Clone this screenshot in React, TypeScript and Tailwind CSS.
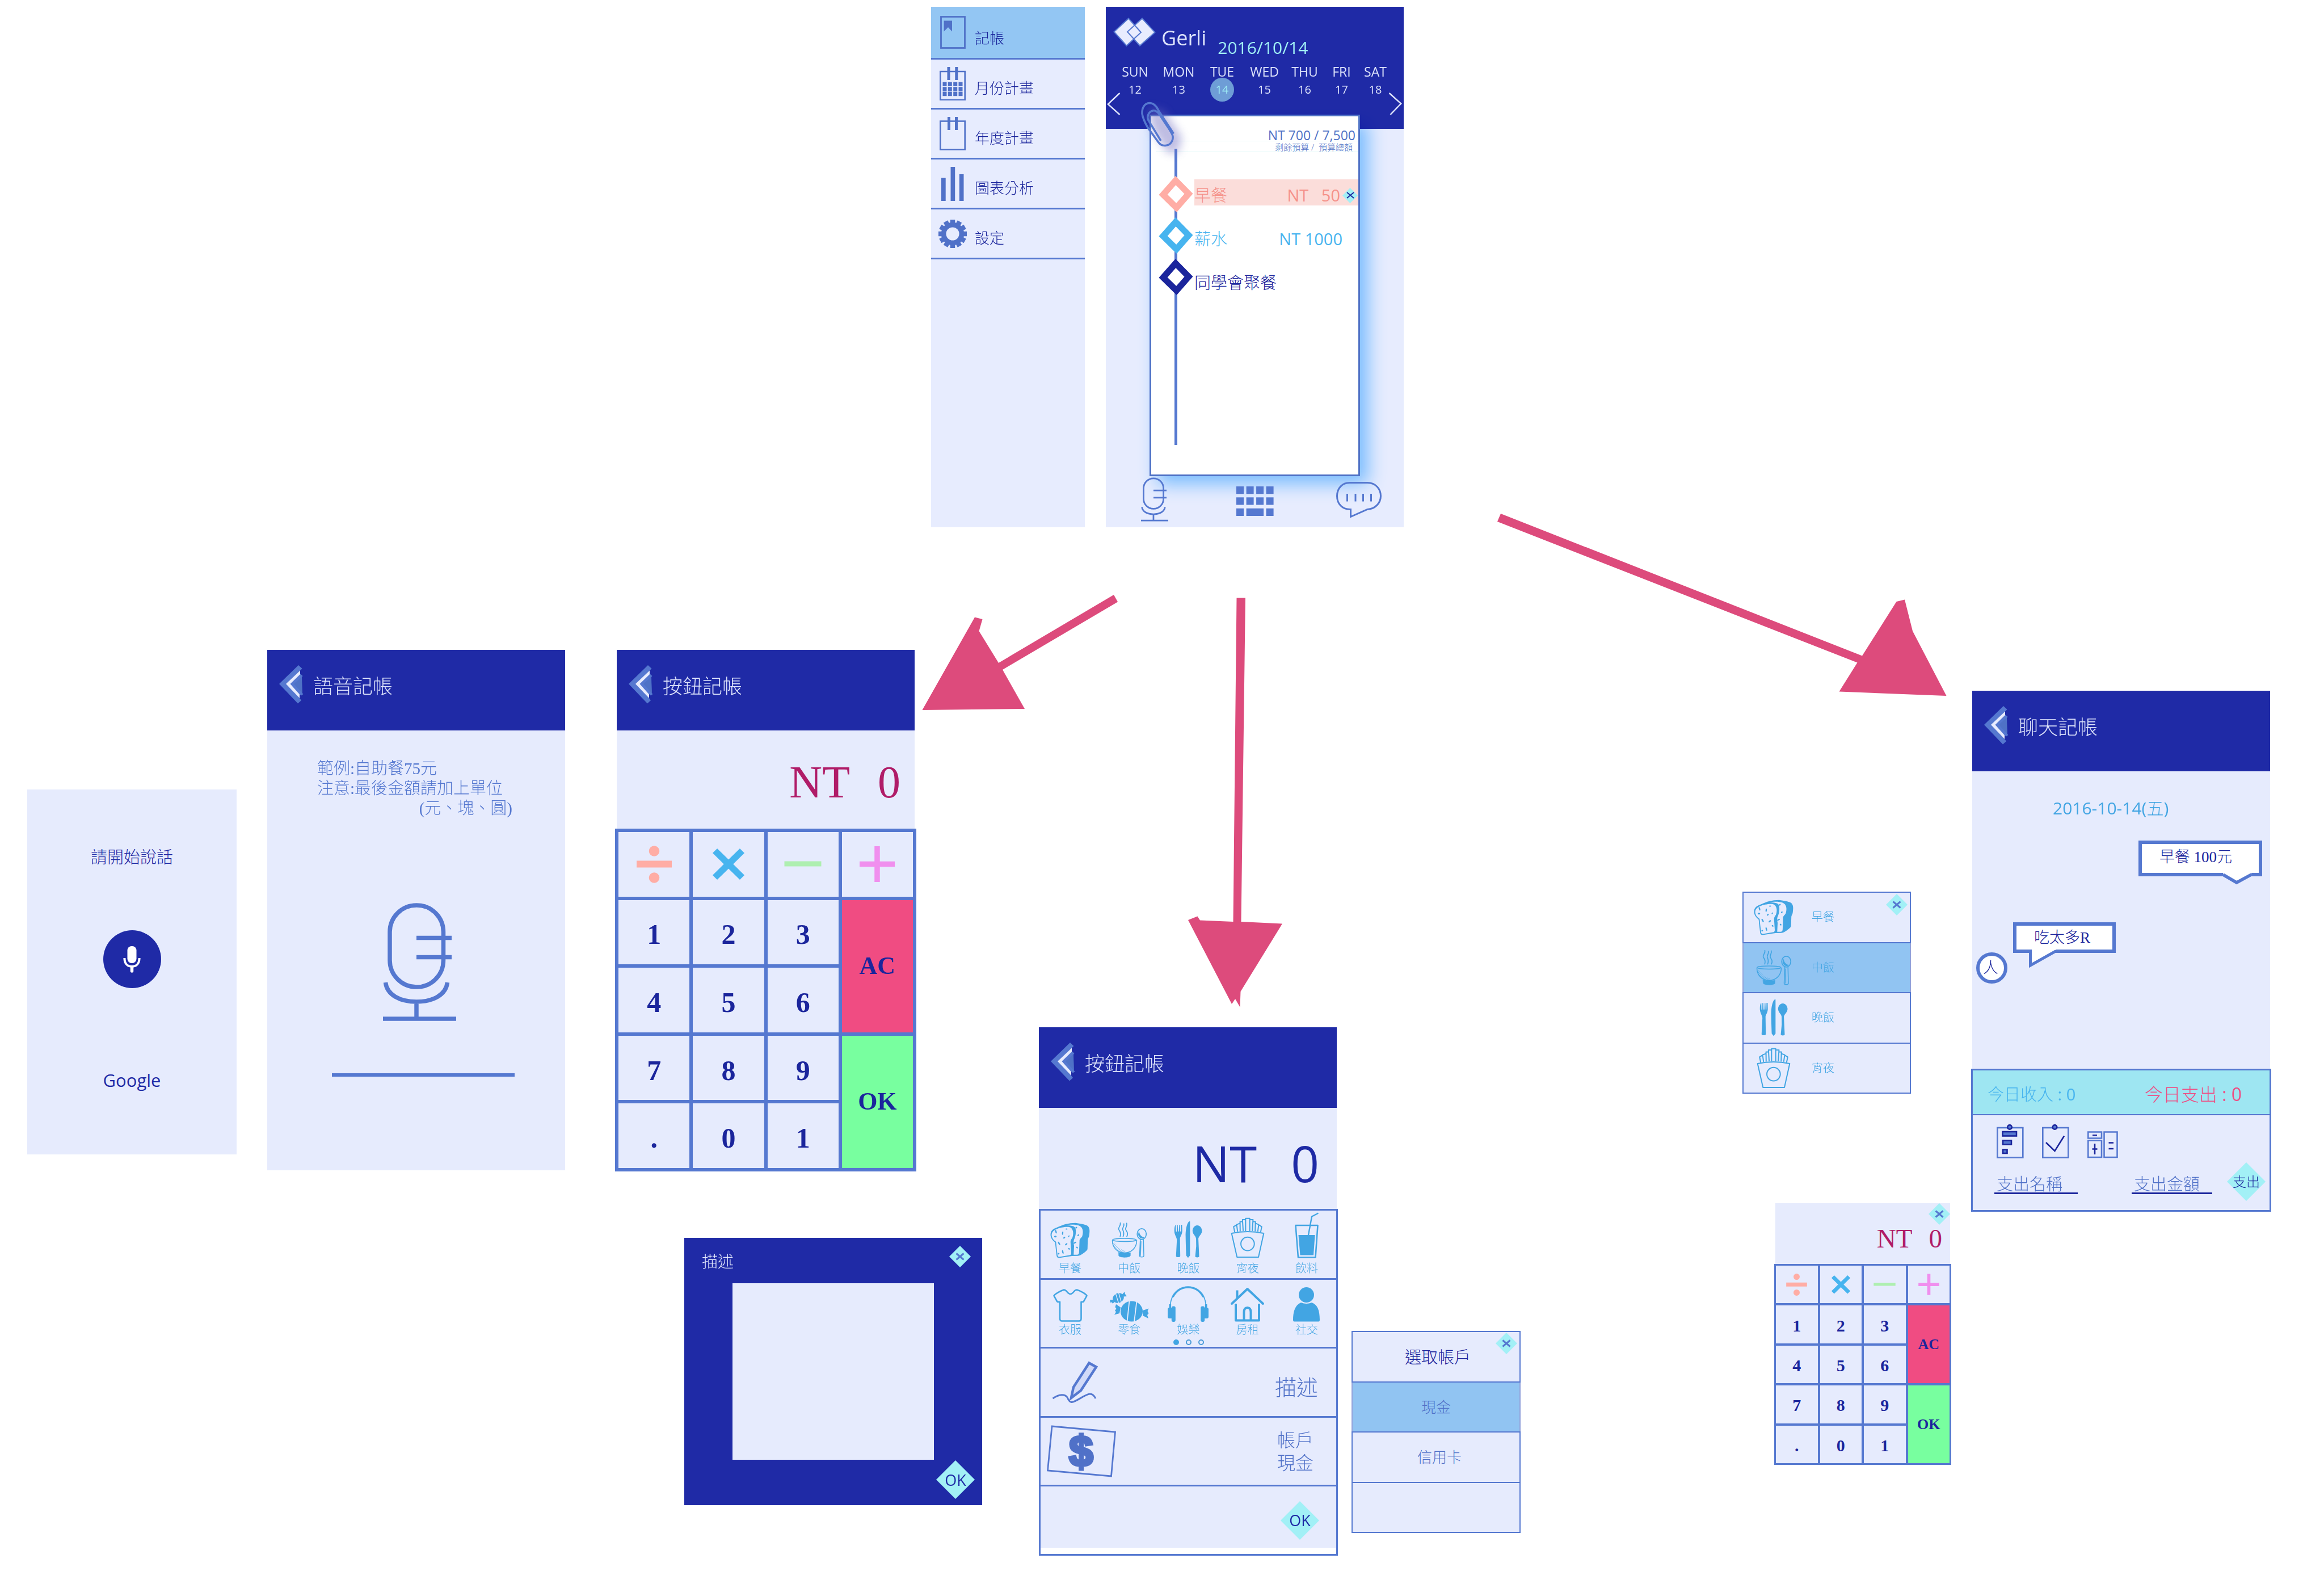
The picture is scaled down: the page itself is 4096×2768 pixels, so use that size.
import React from "react";

/* ---------- shared pieces ---------- */

function Cross({ className }: { className: string }) {
  return (
    <svg viewBox="0 0 16 14" className={className} aria-hidden="true">
      <path d="M1.5 1.5L14.5 12.5M14.5 1.5L1.5 12.5" stroke="currentColor" strokeWidth="3" fill="none" />
    </svg>
  );
}

function Diamond({ className, label, children }: { className: string; label: string; children: React.ReactNode }) {
  return (
    <button type="button" aria-label={label} className={`relative grid shrink-0 place-items-center whitespace-nowrap ${className}`}>
      <svg viewBox="0 0 10 10" className="absolute inset-0 size-full" aria-hidden="true">
        <path d="M5 0L10 5L5 10L0 5Z" fill="#a2f0f6" />
      </svg>
      <span className="relative">{children}</span>
    </button>
  );
}

function CloseButton() {
  return (
    <Diamond label="關閉" className="size-[38px] text-[#5578d0]">
      <Cross className="h-[14px] w-[16px]" />
    </Diamond>
  );
}

function ScreenHeader({ title }: { title: string }) {
  return (
    <header className="flex h-[142px] items-start gap-[17px] bg-[#1f2aa6] pt-[27px] pl-[21px]">
      <button type="button" aria-label="返回">
        <svg viewBox="0 0 43 68" className="h-[68px] w-[43px]" aria-hidden="true">
          <path d="M0 33L34 0L40.5 6L37 9.5V15L41.5 19L40 21L40.7 49L42.5 51L39 53.5L36 51V58L39 62L33 67.5Z" fill="#5578d0" />
          <path d="M26 33L39.6 20.5L40.7 49Z" fill="#4f72c6" />
          <path d="M12 33L37 9.5V16L19.5 33L36 51.5V58Z" fill="#e8ecfe" />
        </svg>
      </button>
      <h2 className="pt-[3px] text-[35px] leading-[68px] font-light text-[#dde3fb]">{title}</h2>
    </header>
  );
}

function MicIcon({ className }: { className: string }) {
  return (
    <svg viewBox="0 0 129 208" className={className} aria-hidden="true" fill="none" stroke="#5578d0" strokeWidth="7.5">
      <rect x="12" y="4" width="94.5" height="144" rx="47" />
      <path d="M59 61.5H121M59 95.5H121M4.5 140C7 162 30 174 59 174S111 162 113.5 140M59 174V204M0 204H129" />
    </svg>
  );
}

/* ---------- category icons ---------- */

const SEEDS: [number, number, number, number, number][] = [
  [178, 190, 5, 13, -15], [225, 200, 5, 12, 5], [252, 172, 7, 4, 0], [174, 224, 9, 6, 0], [236, 232, 8, 5, -40],
  [268, 222, 7, 4, -50], [200, 272, 5, 13, -30], [250, 278, 10, 5, -40], [270, 310, 7, 5, 30], [226, 332, 5, 13, -12],
  [197, 344, 6, 5, -30], [320, 162, 7, 5, -30], [334, 215, 7, 5, -50], [311, 267, 11, 5, -30], [326, 301, 7, 5, 40],
];

function BreadIcon() {
  return (
    <svg viewBox="138 126 278 250" className="h-[63px] w-[70px]" aria-hidden="true">
      <path fill="#42a5e3" d="M170 263C148 245 140 228 140 210C141 180 160 170 187 160C230 140 265 129 315 129C350 134 380 139 395 147C418 160 414 190 411 215C410 228 402 235 401 245L399 310C398 320 392 324 385 329C365 345 350 357 330 359L290 360L205 373C190 375 184 370 182 355L174 285C173 272 173 267 170 263Z" />
      <path fill="#e6ebfd" d="M250 146C280 138 320 141 340 148C370 160 370 195 362 222C350 240 343 240 343 255L340 335C339 345 335 351 325 351L302 351L305 290C301 270 300 256 305 245C318 220 320 185 314 165C308 152 290 146 250 146Z" />
      <path fill="#e6ebfd" d="M178 260C155 243 148 228 148 210C150 180 190 168 218 161C245 155 270 154 282 162C303 180 301 210 293 232C285 243 280 250 280 262L285 338C285 348 282 353 273 354L203 366C196 367 190 362 189 353L181 285C180 270 180 265 178 260Z" />
      {SEEDS.map(([cx, cy, rx, ry, r]) => (
        <ellipse key={`${cx}-${cy}`} cx={cx} cy={cy} rx={rx} ry={ry} fill="#42a5e3" transform={`rotate(${r} ${cx} ${cy})`} />
      ))}
    </svg>
  );
}

function BowlIcon() {
  return (
    <svg viewBox="156 464 252 254" className="h-[64px] w-[63px]" aria-hidden="true" fill="none" stroke="#42a5e3" strokeLinecap="round">
      <path strokeWidth="7" d="M218 470C224 490 202 498 207 515C212 530 227 536 217 565M243 476C248 494 231 502 235 517C240 532 248 540 238 565M263 472C270 492 251 502 256 516C262 532 277 540 264 565" />
      <ellipse cx="247" cy="590" rx="84" ry="11" strokeWidth="6" />
      <path strokeWidth="6" d="M162 594C162 650 205 681 248 681S333 650 334 594" />
      <path fill="#42a5e3" strokeWidth="2" d="M205 677C225 684 270 684 290 679L289 702C280 716 215 716 207 702Z" />
      <path strokeWidth="3" d="M168 618L176 612M171 628L182 618M175 638L188 626M181 647L194 634M188 656L201 641M196 663L208 648M204 670L216 654M213 674L225 658M222 677L234 662M231 679L243 665M241 680L252 668" />
      <ellipse cx="369" cy="548" rx="32" ry="38" strokeWidth="7" />
      <path fill="#42a5e3" strokeWidth="1" d="M350 530C352 550 365 568 386 572C372 588 346 575 344 548Z" />
      <path strokeWidth="6" d="M359 588L354 700Q354 710 369 710T384 700L381 588" />
      <path strokeWidth="5" d="M364 600L361 700" />
    </svg>
  );
}

function CutleryIcon() {
  return (
    <svg viewBox="158 821 201 263" className="h-[66px] w-[50px]" aria-hidden="true" fill="#42a5e3">
      <path d="M161 890C161 870 164 855 169 849H171L172 895L178 896L179 849H185L187 895H193L195 849H200L202 895H207L208 848H216L217 890C218 915 203 930 201 945L203 1070C203 1080 173 1080 173 1070L179 955C178 935 161 920 161 890Z" />
      <path d="M271 823C255 823 240 870 241 930C242 990 244 1030 245 1066L258 1082L272 1066V825Z" />
      <path d="M323 852C345 852 357 875 357 890C357 915 336 925 331 945L337 1072C336 1081 310 1081 309 1072L316 1000L315 945C312 925 290 915 290 890C290 875 302 852 323 852Z" />
    </svg>
  );
}

function FriesIcon() {
  return (
    <svg viewBox="138 1161 237 286" className="h-[72px] w-[60px]" aria-hidden="true" fill="none" stroke="#42a5e3" strokeWidth="8" strokeLinejoin="round">
      <path d="M144 1272Q256 1248 369 1272L332 1439H182Z" />
      <circle cx="256" cy="1346" r="47" />
      <path d="M242 1256V1168H271V1256M242 1177H220L225 1256M220 1191H203L204 1258M203 1202L179 1211L186 1260M179 1213L158 1226L166 1264M271 1177H294L289 1256M294 1191H311L309 1258M311 1202L334 1211L327 1260M334 1213L355 1226L347 1264" />
    </svg>
  );
}

function DrinkIcon() {
  return (
    <svg viewBox="0 0 42 81" className="h-[81px] w-[42px]" aria-hidden="true">
      <path d="M1.5 23H40.5L36.5 79.5H6Z" fill="none" stroke="#42a5e3" strokeWidth="2.6" strokeLinejoin="round" />
      <path d="M6.5 40H35.6L33 75.4H9.5Z" fill="#42a5e3" />
      <path d="M23.8 41L30 7.5L41.5 1.5" fill="none" stroke="#42a5e3" strokeWidth="2.4" />
    </svg>
  );
}

function ShirtIcon() {
  return (
    <svg viewBox="0 0 61 58" className="h-[58px] w-[61px]" aria-hidden="true">
      <path d="M19 1.5C24 1 25 9 30.5 9S37 1 42 1.5C50 4 58 9 59.5 12L54 22C52 24 51 22 49.5 23V52Q49.5 56.5 46 56.5H15Q12 56.5 12 52V23C10 22 9 24 7 22L1.5 12C3 9 12 4 19 1.5Z" fill="none" stroke="#42a5e3" strokeWidth="2.6" />
    </svg>
  );
}

function CandyIcon() {
  return (
    <svg viewBox="0 0 69 53" className="h-[53px] w-[69px]" aria-hidden="true" fill="#42a5e3">
      <ellipse cx="38.5" cy="34.5" rx="19.5" ry="18" />
      <path d="M11 22L19 27.5L17 38L8 40.5L11 35.5L9 33L11.5 30L9.5 27ZM58 33L68.5 29.5L66.5 34L68.5 38L66 41L68 47L58 42Z" />
      <ellipse cx="15" cy="11" rx="10" ry="8.5" transform="rotate(-25 15 11)" />
      <path d="M0 14L6 14L8 19L4.5 20.5L4 18.5L1 19ZM22 4.5L26 0L27 4L30 8L24 8.5Z" />
      <path d="M34.5 16L30.5 53M47.5 16L43 53" stroke="#e6ebfd" strokeWidth="1.8" />
      <path d="M10 2L15.5 20M15 0L20.5 19" stroke="#e6ebfd" strokeWidth="1.3" />
    </svg>
  );
}

function HeadphonesIcon() {
  return (
    <svg viewBox="0 0 72 63" className="h-[63px] w-[72px]" aria-hidden="true" fill="#42a5e3">
      <path d="M9 19C15 8 25 2 36 2S57 8 63 19" fill="none" stroke="#42a5e3" strokeWidth="3.6" />
      <path d="M9 18C6 23 5 28 4.5 34M63 18C66 23 67 28 67.5 34" fill="none" stroke="#42a5e3" strokeWidth="1.8" />
      <rect x="2.5" y="32" width="3.6" height="9" />
      <rect x="65.9" y="32" width="3.6" height="9" />
      <rect x="0" y="38" width="9" height="19" rx="3" />
      <rect x="63" y="38" width="9" height="19" rx="3" />
      <rect x="6.8" y="35.5" width="7" height="27.5" rx="3" />
      <rect x="58.2" y="35.5" width="7" height="27.5" rx="3" />
    </svg>
  );
}

function HouseIcon() {
  return (
    <svg viewBox="0 0 59 61" className="h-[61px] w-[59px]" aria-hidden="true" fill="none" stroke="#42a5e3" strokeWidth="4" strokeLinejoin="round">
      <path d="M2 29L29.5 3L57 29" strokeLinecap="round" />
      <path d="M11.5 19V5.5" />
      <path d="M9 29V58.5H50V29" />
      <path d="M23.5 58V44Q23.5 36 29.5 36T35.5 44V58" />
    </svg>
  );
}

function PersonIcon() {
  return (
    <svg viewBox="0 0 47 61" className="h-[61px] w-[47px]" aria-hidden="true" fill="#42a5e3">
      <circle cx="23.5" cy="13.5" r="13.5" />
      <path d="M0 58C0 40 5 31 14 27Q23.5 31 33 27C43 31 47 40 47 58Q47 60.5 45 60.5H2Q0 60.5 0 58Z" />
    </svg>
  );
}

/* ---------- side menu ---------- */

function Tile({ children, viewBox, className }: { children: React.ReactNode; viewBox: string; className: string }) {
  return (
    <svg viewBox={viewBox} className={className} aria-hidden="true" fill="#5071c8">
      {children}
    </svg>
  );
}

const MENU = [
  {
    label: "記帳",
    icon: (
      <Tile viewBox="0 0 45 58" className="h-[58px] w-[45px]">
        <rect x="1.5" y="1.5" width="42" height="55" fill="none" stroke="#5071c8" strokeWidth="2.8" />
        <path d="M6.6 8.6H21V27.5L14 20L6.6 27.5Z" />
      </Tile>
    ),
  },
  {
    label: "月份計畫",
    icon: (
      <Tile viewBox="0 0 46 59" className="h-[59px] w-[46px]">
        <path d="M1.3 8H44.7V58H1.3Z" fill="none" stroke="#5071c8" strokeWidth="2.6" />
        <path d="M13.5 0H18.5V23H13.5ZM27.3 0H32.3V23H27.3Z" />
        {[26.5, 35.2, 43.7].map((y) => [5.5, 14.8, 24.2, 33.5].map((x) => <rect key={`${x}-${y}`} x={x} y={y} width="7" height="7.5" />))}
      </Tile>
    ),
  },
  {
    label: "年度計畫",
    icon: (
      <Tile viewBox="0 0 46 59" className="h-[59px] w-[46px]">
        <path d="M1.3 7.5H44.7V57.5H1.3Z" fill="none" stroke="#5071c8" strokeWidth="2.6" />
        <path d="M14 0H19V23H14ZM27 0H32V23H27Z" />
      </Tile>
    ),
  },
  {
    label: "圖表分析",
    icon: (
      <Tile viewBox="0 0 40 60" className="h-[60px] w-[40px]">
        <path d="M0 19.6H7.7V60H0ZM16.5 0H24.2V60H16.5ZM31.8 13H39.5V60H31.8Z" />
      </Tile>
    ),
  },
  {
    label: "設定",
    icon: (
      <Tile viewBox="-26 -26 52 52" className="h-[50px] w-[52px]">
        <circle r="16.5" fill="none" stroke="#5071c8" strokeWidth="9" />
        {[0, 30, 60, 90, 120, 150, 180, 210, 240, 270, 300, 330].map((a) => (
          <rect key={a} x="-4.4" y="-26" width="8.8" height="8" transform={`rotate(${a})`} />
        ))}
      </Tile>
    ),
  },
];

function SideMenu() {
  return (
    <nav className="flex h-[917px] w-[271px] flex-col bg-[#e7ecfe]">
      {MENU.map((item, i) => (
        <a
          key={item.label}
          href="#"
          className={`flex items-center gap-3 border-b-3 border-[#5578d0] pl-[11px] ${i === 0 ? "h-[93px] bg-[#93c6f3]" : "h-[88px]"}`}
        >
          <span className="flex w-[54px] justify-center">{item.icon}</span>
          <span className="self-end pb-[18px] text-[26px] leading-[34px] font-light text-[#1b259c]">{item.label}</span>
        </a>
      ))}
    </nav>
  );
}

/* ---------- diary screen ---------- */

const DAYS = [
  ["SUN", 12], ["MON", 13], ["TUE", 14], ["WED", 15], ["THU", 16], ["FRI", 17], ["SAT", 18],
] as const;

const ENTRIES = [
  { name: "早餐", amount: "NT   50", ring: "#ffada5", row: "bg-[#fbddda] pr-px text-[#f5928a]", closable: true },
  { name: "薪水", amount: "NT 1000", ring: "#47b4ef", row: "pr-[28px] text-[#47b4ef]", closable: false },
  { name: "同學會聚餐", amount: "", ring: "#1b259c", row: "text-[#1b259c]", closable: false },
];

function DiaryScreen() {
  return (
    <section className="flex h-[917px] w-[525px] flex-col bg-[#e7ecfe]">
      <header className="h-[215px] shrink-0 bg-[#1f2aa6] text-[#dde3fb]">
        <div className="flex h-[103px] items-start pl-[13px]">
          <svg viewBox="0 0 75 51" className="mt-[19px] h-[51px] w-[75px]" aria-hidden="true">
            <path d="M27 1.5L49 26L23.5 49.5L1.5 25Z" fill="#e8ecfe" />
            <path d="M51 1.5L73.5 26L47 49.5L25 25Z" fill="#e8ecfe" />
            <path d="M27 1.5L49 26L23.5 49.5L1.5 25ZM51 1.5L73.5 26L47 49.5L25 25Z" fill="none" stroke="#5578d0" strokeWidth="2" />
          </svg>
          <h1 className="mt-[35px] ml-[10px] text-[36px] leading-[40px]">Gerli</h1>
          <p className="mt-[56px] ml-[20px] text-[30px] leading-[32px] text-[#a0f0f5]">2016/10/14</p>
        </div>
        <div className="grid grid-cols-[77fr_77fr_76fr_73fr_69fr_61fr_58fr] pr-[21px] pl-[13px]">
          {DAYS.map(([day, n]) => (
            <button key={day} type="button" className="flex flex-col items-center">
              <span className="text-[23px] leading-[22px]">{day}</span>
              <span
                className={`grid size-[42px] place-items-center rounded-full text-[20px] leading-none ${n === 14 ? "bg-[#6e9dd6] text-[#a0f0f5]" : ""}`}
              >
                {n}
              </span>
            </button>
          ))}
        </div>
        <div className="-mt-4 flex justify-between pr-[3px] pl-[2px]">
          <button type="button" aria-label="上一週">
            <svg viewBox="0 0 24 40" className="h-[40px] w-[24px]" aria-hidden="true">
              <path d="M22.5 1L1.8 20.5L22.5 39" fill="none" stroke="#dde3fb" strokeWidth="2.5" />
            </svg>
          </button>
          <button type="button" aria-label="下一週">
            <svg viewBox="0 0 24 40" className="h-[40px] w-[24px]" aria-hidden="true">
              <path d="M1.5 1L22.2 19.5L3.5 39" fill="none" stroke="#dde3fb" strokeWidth="2.5" />
            </svg>
          </button>
        </div>
      </header>

      <div className="relative -mt-[25px] ml-[77px] h-[637px] w-[371px] shrink-0">
        <div className="absolute inset-0 mix-blend-multiply shadow-[14px_14px_30px_#86ccff]" />
        <div className="relative h-full border-3 border-[#4f72c6] bg-white pt-[24px]">
          <p className="ml-[8px] border-b border-[#e3f8f8] pr-[5px] text-right text-[23px] leading-[19px] text-[#4f72c6]">
            NT 700 / 7,500
          </p>
          <p className="ml-[8px] border-b border-[#e3f8f8] pt-[3px] pr-[10px] text-right text-[15px] leading-[15px] font-light whitespace-pre text-[#4f72c6]">
            剩餘預算 /  預算總額
          </p>
          <div className="relative flex gap-[2px] pl-[13px]">
            <span className="absolute -top-[6px] left-[41px] h-[522px] w-[5px] bg-[#5578d0]" />
            <div className="relative flex flex-col pt-[37px]">
              {ENTRIES.map((e) => (
                <svg key={e.name} viewBox="0 0 61 73" className="h-[73px] w-[61px]" aria-hidden="true">
                  <path d="M30 13L53 36.5L31.5 61L8 38Z" fill="#fff" stroke={e.ring} strokeWidth="11" />
                </svg>
              ))}
            </div>
            <ul className="flex flex-1 flex-col gap-[31px] pt-[48px]">
              {ENTRIES.map((e) => (
                <li key={e.name} className={`flex h-[46px] items-center justify-between pt-[10px] text-[29px] leading-[36px] ${e.row}`}>
                  <span className="font-light">{e.name}</span>
                  <span className="flex items-center gap-[4px] whitespace-pre">
                    {e.amount}
                    {e.closable && (
                      <Diamond label="刪除" className="size-[27px] text-[#1b259c]">
                        <svg viewBox="0 0 14 12" className="h-[12px] w-[14px]" aria-hidden="true">
                          <path d="M1 1L13 11M13 1L1 11" stroke="currentColor" strokeWidth="1.8" />
                        </svg>
                      </Diamond>
                    )}
                  </span>
                </li>
              ))}
            </ul>
          </div>
        </div>
        <svg viewBox="-10 -10 100 120" className="absolute -top-[32px] -left-[25px] h-[120px] w-[100px]" aria-hidden="true">
          <defs>
            <filter id="clip-shade" x="-50%" y="-50%" width="200%" height="200%">
              <feGaussianBlur stdDeviation="8" />
            </filter>
          </defs>
          <path d="M12 10L40 14L72 62L66 88L48 90L20 50Z" fill="#6f6cc0" opacity="0.45" filter="url(#clip-shade)" />
          <path
            d="M57.5 55.5L31 15C26 4 20 1.5 15 1.5C6 2 1.5 10 2 20C3 28 8 38 12 45L28 67C34 76 38 77 43 76.5C52 76 57 68 56 60C55 55 50 48 46 42L32 21C28 16 25 14 21 15C13 17 10 25 13 32L35 68"
            fill="none"
            stroke="#5578d0"
            strokeWidth="3.5"
          />
        </svg>
      </div>

      <nav className="relative flex flex-1 items-start justify-between pr-[39px] pl-[62px]">
        <button type="button" aria-label="語音記帳" className="mt-[2px] w-[58px]">
          <MicIcon className="h-[78px] w-[48px]" />
        </button>
        <button type="button" aria-label="按鈕記帳" className="mt-[18px]">
          <svg viewBox="0 0 66 52" className="h-[52px] w-[66px]" aria-hidden="true" fill="#5578d0">
            {[0, 19.3].map((y) => [0, 17.6, 35.1, 52.6].map((x) => <rect key={`${x}-${y}`} x={x} y={y} width="13" height="13.2" />))}
            <path d="M0 38.7H13V52H0ZM17.6 38.7H48.1V52H17.6ZM52.6 38.7H65.6V52H52.6Z" />
          </svg>
        </button>
        <button type="button" aria-label="聊天記帳" className="mt-[10px]">
          <svg viewBox="0 0 80 64" className="h-[64px] w-[80px]" aria-hidden="true" fill="none" stroke="#5578d0" strokeWidth="3">
            <path d="M24 1.5H55C70 1.5 78.5 13 78.5 25C78.5 38 68 48 55 48.5L25.5 61.5V48.5C10 49 1.5 38 1.5 25C1.5 12 10 1.5 24 1.5Z" />
            <path d="M19.5 21V34.5M34 21V34.5M47.5 21V34.5M61.5 21V34.5" />
          </svg>
        </button>
      </nav>
    </section>
  );
}

/* ---------- voice ---------- */

function GoogleCard() {
  return (
    <section className="flex h-[643px] w-[369px] flex-col items-center bg-[#e6ebfd] pt-[104px] text-[#1e2aa5]">
      <p className="text-[29px] leading-[30px] font-light">請開始說話</p>
      <button type="button" aria-label="開始錄音" className="mt-[114px] grid size-[102px] place-items-center rounded-full bg-[#1f2aa6]">
        <svg viewBox="0 0 31 47" className="h-[47px] w-[31px]" aria-hidden="true">
          <rect x="7.5" y="0" width="16" height="30" rx="7.5" fill="#fff" />
          <path d="M2.4 21C2.4 31 8 36 15.5 36S28.6 31 28.6 21" fill="none" stroke="#fff" strokeWidth="4" />
          <path d="M15.5 37V44" stroke="#fff" strokeWidth="5.5" strokeLinecap="round" />
        </svg>
      </button>
      <p className="mt-[146px] text-[31px] leading-[32px]">Google</p>
    </section>
  );
}

function VoiceScreen() {
  return (
    <section className="h-[917px] w-[525px] bg-[#e6ebfd]">
      <ScreenHeader title="語音記帳" />
      <div className="ml-[88px] w-[344px] pt-[50px] font-['Liberation_Serif','Noto_Sans_CJK_TC',serif] text-[29px] leading-[35px] font-light whitespace-nowrap text-[#5578d0]">
        <p>範例:自助餐75元</p>
        <p>注意:最後金額請加上單位</p>
        <p className="text-right">(元、塊、圓)</p>
      </div>
      <MicIcon className="mt-[149px] ml-[204px] h-[208px] w-[129px]" />
      <div className="mt-[92px] ml-[114px] h-[6px] w-[322px] bg-[#5578d0]" />
    </section>
  );
}

/* ---------- calculator ---------- */

const OPS = [
  { name: "除", d: <><path d="M0 25.5H62V37.5H0Z" fill="#ffada5" /><circle cx="31" cy="8.5" r="9.3" fill="#ffada5" /><circle cx="31" cy="55.5" r="9.3" fill="#ffada5" /></> },
  { name: "乘", d: <path d="M7 8L55 55M55 8L7 55" stroke="#47b4ef" strokeWidth="11.5" /> },
  { name: "減", d: <path d="M-1.5 31H63.5" stroke="#aeefb0" strokeWidth="9" /> },
  { name: "加", d: <path d="M0 31.5H62M31 0V63" stroke="#f08fee" strokeWidth="9.5" /> },
];
const DIGIT_ROWS = [["1", "2", "3"], ["4", "5", "6"], ["7", "8", "9"], [".", "0", "1"]];

function Keypad({ small = false }: { small?: boolean }) {
  const cell = "grid place-items-center bg-[#e6ebfd]";
  const word = small ? "text-[26px] leading-none" : "text-[44px] leading-none";
  return (
    <div
      className={`grid grid-cols-4 grid-rows-5 bg-[#5578d0] font-['Liberation_Serif',serif] font-bold text-[#1b259c] ${
        small ? "-mx-[2px] h-[354px] gap-[4px] p-[3px] text-[30px] leading-none" : "-mx-[3px] h-[604px] gap-[6px] p-[6px] text-[50px] leading-none"
      }`}
    >
      {OPS.map((op) => (
        <button key={op.name} type="button" aria-label={op.name} className={cell}>
          <svg viewBox="-2 -1 66 66" className={small ? "size-[39px]" : "size-[66px]"} aria-hidden="true" fill="none">
            {op.d}
          </svg>
        </button>
      ))}
      {DIGIT_ROWS.map((row, r) =>
        row.map((d, c) => (
          <button
            key={`${r}-${c}`}
            type="button"
            className={`${cell} ${small ? "pt-1" : "pt-2"} ${["row-start-2", "row-start-3", "row-start-4", "row-start-5"][r]} ${["col-start-1", "col-start-2", "col-start-3"][c]}`}
          >
            {d}
          </button>
        )),
      )}
      <button type="button" className={`col-start-4 row-span-2 row-start-2 grid place-items-center bg-[#f04c82] ${word}`}>
        AC
      </button>
      <button type="button" className={`col-start-4 row-span-2 row-start-4 grid place-items-center bg-[#78ff9f] ${word}`}>
        OK
      </button>
    </div>
  );
}

function CalculatorScreen() {
  return (
    <section className="w-[525px] bg-[#e6ebfd]">
      <ScreenHeader title="按鈕記帳" />
      <output className="flex h-[173px] items-center justify-end gap-[49px] pt-[8px] pr-[25px] font-['Liberation_Serif',serif] text-[80px] leading-none text-[#b01c68]">
        <span>NT</span>
        <span>0</span>
      </output>
      <Keypad />
    </section>
  );
}

function SmallCalculator() {
  return (
    <section className="relative w-[308px] bg-[#e6ebfd]">
      <output className="flex h-[107px] items-end justify-end gap-[29px] pr-[14px] pb-[21px] font-['Liberation_Serif',serif] text-[47px] leading-none text-[#b01c68]">
        <span>NT</span>
        <span>0</span>
      </output>
      <div className="absolute top-0 right-0">
        <CloseButton />
      </div>
      <Keypad small />
    </section>
  );
}

/* ---------- description dialog ---------- */

function DescribeDialog() {
  return (
    <form className="h-[471px] w-[525px] bg-[#1f2aa6]">
      <div className="flex h-[80px] items-start justify-between pt-[14px] pr-[20px] pl-[31px]">
        <label htmlFor="describe" className="pt-[9px] text-[28px] leading-[36px] font-light text-[#e6ebfd]">
          描述
        </label>
        <CloseButton />
      </div>
      <textarea id="describe" className="ml-[85px] block h-[311px] w-[355px] resize-none bg-[#e6ebfd] p-4 text-[28px] text-[#1b259c]" />
      <div className="flex justify-end pt-px pr-[13px]">
        <Diamond label="OK" className="size-[68px] text-[27px] leading-none text-[#1e2aa5]">
          OK
        </Diamond>
      </div>
    </form>
  );
}

/* ---------- category screen ---------- */

const CATEGORIES = [
  [
    { label: "早餐", icon: <BreadIcon /> },
    { label: "中飯", icon: <BowlIcon /> },
    { label: "晚飯", icon: <CutleryIcon /> },
    { label: "宵夜", icon: <FriesIcon /> },
    { label: "飲料", icon: <DrinkIcon /> },
  ],
  [
    { label: "衣服", icon: <ShirtIcon /> },
    { label: "零食", icon: <CandyIcon /> },
    { label: "娛樂", icon: <HeadphonesIcon /> },
    { label: "房租", icon: <HouseIcon /> },
    { label: "社交", icon: <PersonIcon /> },
  ],
];

function CategoryScreen() {
  return (
    <section className="w-[525px] bg-[#e6ebfd]">
      <ScreenHeader title="按鈕記帳" />
      <output className="flex h-[178px] items-center justify-end gap-[60px] pt-[16px] pr-[31px] text-[87px] leading-none text-[#1e2aa5]">
        <span>NT</span>
        <span>0</span>
      </output>
      <div className="-mr-[2px] grid h-[611px] grid-rows-5 gap-[3px] bg-[#5578d0] p-[3px]">
        {CATEGORIES.map((row, r) => (
          <div key={r} className="relative grid grid-cols-5 bg-[#e6ebfd]">
            {row.map((c) => (
              <button key={c.label} type="button" className="flex flex-col items-center text-[20px] leading-[28px] font-light text-[#42a5e3]">
                <span className={`flex w-full items-end justify-center ${r === 0 ? "h-[84px]" : "h-[74px]"}`}>{c.icon}</span>
                <span className={r === 0 ? "pt-[4px]" : ""}>{c.label}</span>
              </button>
            ))}
            {r === 1 && (
              <div className="absolute inset-x-0 bottom-[3px] flex justify-center gap-[12px]">
                <span className="size-[10px] rounded-full bg-[#42a5e3]" />
                <span className="size-[10px] rounded-full border-2 border-[#4a9bd8]" />
                <span className="size-[10px] rounded-full border-2 border-[#4a9bd8]" />
              </div>
            )}
          </div>
        ))}
        <button type="button" className="flex items-center justify-between bg-[#e6ebfd] pr-[32px] pl-[21px] text-[38px] leading-none font-light text-[#5071c8]">
          <svg viewBox="0 0 80 75" className="h-[75px] w-[80px]" aria-hidden="true" stroke="#5578d0">
            <path d="M33 65L37 46L64.5 3.5L77 10.5L50 52Z" fill="#d2daf8" strokeWidth="4.5" />
            <path d="M.5 66C12 58 22 58 26 64C29 71 31 73 34 72.5C42 72 58 58 66 58C71 58 74 62 76 66" fill="none" strokeWidth="3" />
          </svg>
          <span className="pt-[16px]">描述</span>
        </button>
        <button type="button" className="flex items-center justify-between bg-[#e6ebfd] pr-[40px] pl-[11px] text-[32px] leading-[40px] font-light text-[#5071c8]">
          <svg viewBox="0 0 122 92" className="h-[92px] w-[122px]" aria-hidden="true">
            <path d="M9 2L120.5 12L113.5 90L1.5 80Z" fill="none" stroke="#5578d0" strokeWidth="2.8" />
            <text x="60.5" y="72" textAnchor="middle" fontFamily="Liberation Sans, sans-serif" fontWeight="700" fontSize="76" fill="#5071c8" stroke="#5071c8" strokeWidth="5">
              $
            </text>
          </svg>
          <span>
            帳戶
            <br />
            現金
          </span>
        </button>
        <div className="flex items-center justify-end border-b-[11px] border-white bg-[#e6ebfd] pt-[11px] pr-[30px]">
          <Diamond label="OK" className="size-[68px] text-[27px] leading-none text-[#1e2aa5]">
            OK
          </Diamond>
        </div>
      </div>
    </section>
  );
}

/* ---------- pop-up lists ---------- */

function AccountList() {
  return (
    <section className="relative grid h-[356px] w-[298px] grid-rows-4 gap-[2px] bg-[#5578d0] p-[2px] text-[26px] leading-none font-light text-[#5071c8]">
      <h3 className="grid place-items-center bg-[#e6ebfd] pl-[6px] text-[29px] text-[#1b259c]">選取帳戶</h3>
      <button type="button" className="-mx-[2px] border-x-2 border-[#93a2da] bg-[#91c4f2]">現金</button>
      <button type="button" className="bg-[#e6ebfd] pl-[12px]">信用卡</button>
      <div className="bg-[#e6ebfd]" />
      <div className="absolute top-[3px] right-[6px]">
        <CloseButton />
      </div>
    </section>
  );
}

function MealList() {
  return (
    <section className="relative grid h-[356px] w-[297px] grid-rows-4 gap-[2px] bg-[#5578d0] p-[2px] text-[20px] leading-none font-light text-[#42a5e3]">
      {CATEGORIES[0].slice(0, 4).map((c, i) => (
        <button
          key={c.label}
          type="button"
          className={`flex items-center gap-[32px] overflow-hidden ${
            i === 1 ? "-mx-[2px] border-x-2 border-[#93a2da] bg-[#91c4f2] pl-[18px]" : "bg-[#e6ebfd] pl-[18px]"
          }`}
        >
          <span className="flex w-[70px] justify-center">{c.icon}</span>
          {c.label}
        </button>
      ))}
      <div className="absolute top-[4px] right-[6px]">
        <CloseButton />
      </div>
    </section>
  );
}

/* ---------- chat ---------- */

function ChatScreen() {
  const serif = "font-['Liberation_Serif','Noto_Sans_CJK_TC',serif] text-[27px] leading-none font-light text-[#1b259c]";
  return (
    <section className="w-[525px] bg-[#e6ebfd]">
      <ScreenHeader title="聊天記帳" />
      <div className="h-[524px] pt-[45px]">
        <p className="pl-[142px] text-[30px] leading-[40px] text-[#42a5e3]">
          2016-10-14(<span className="font-light">五</span>)
        </p>
        <div className={`relative mt-[37px] mr-[14px] ml-auto flex h-[63px] w-[218px] items-center justify-center border-6 border-[#5578d0] bg-white pr-[16px] ${serif}`}>
          <span className="-mt-1">早餐 100元</span>
          <svg viewBox="0 0 50 23" className="absolute top-[50px] left-[143px] h-[23px] w-[50px]" aria-hidden="true">
            <path d="M0 0H50V5L24 17L0 5Z" fill="#fff" />
            <path d="M0 4L24 18L50 4" fill="none" stroke="#5578d0" strokeWidth="5.5" />
          </svg>
        </div>
        <div className="mt-[81px] flex gap-[10px] pl-[7px]">
          <span className={`mt-[53px] grid size-[55px] shrink-0 place-items-center rounded-full border-6 border-[#5578d0] bg-white pr-[4px] ${serif}`}>人</span>
          <div className={`relative flex h-[54px] w-[181px] items-center justify-center border-6 border-[#5578d0] bg-white pr-[8px] ${serif}`}>
            <span>吃太多R</span>
            <svg viewBox="0 0 50 34" className="absolute top-[41px] left-[20px] h-[34px] w-[50px]" aria-hidden="true">
              <path d="M4 0H50V1L4 28Z" fill="#fff" />
              <path d="M4.5 1V29L49 4" fill="none" stroke="#5578d0" strokeWidth="5" />
            </svg>
          </div>
        </div>
      </div>
      <div className="-mx-[2px] flex h-[252px] flex-col border-3 border-[#5578d0] bg-[#e6ebfd]">
        <div className="flex h-[79px] items-center justify-between border-b-2 border-[#5578d0] bg-[#9ee6f2] pt-[6px] pr-[49px] pl-[26px] whitespace-pre">
          <span className="text-[29px] leading-none text-[#47b4ef]">
            <span className="font-light">今日收入</span> : 0
          </span>
          <span className="text-[32px] leading-none text-[#f04c82]">
            <span className="font-light">今日支出</span> : 0
          </span>
        </div>
        <div className="flex items-end gap-[32px] pt-[16px] pl-[42px]">
          <button type="button" aria-label="清單">
            <svg viewBox="0 0 48 60" className="h-[60px] w-[48px]" aria-hidden="true">
              <rect x="1.3" y="6" width="45" height="52.5" fill="none" stroke="#5578d0" strokeWidth="2.6" />
              <g fill="#5578d0" stroke="#1b259c" strokeWidth="2.6">
                <circle cx="23" cy="5" r="3.8" />
                <rect x="10.5" y="13" width="24.5" height="7.5" />
                <rect x="11" y="28.5" width="15" height="7" />
                <rect x="11" y="44.5" width="7.5" height="6.5" />
              </g>
            </svg>
          </button>
          <button type="button" aria-label="完成">
            <svg viewBox="0 0 48 60" className="h-[60px] w-[48px]" aria-hidden="true">
              <rect x="1.3" y="6" width="45" height="52.5" fill="none" stroke="#5578d0" strokeWidth="2.6" />
              <circle cx="22.5" cy="5" r="3.8" fill="#5578d0" stroke="#1b259c" strokeWidth="2.6" />
              <path d="M7 32L22.5 47L39 20.5" fill="none" stroke="#1b259c" strokeWidth="2.6" />
            </svg>
          </button>
          <button type="button" aria-label="計算機">
            <svg viewBox="0 0 54 48" className="h-[48px] w-[54px]" aria-hidden="true" fill="none" strokeWidth="2.6">
              <path d="M1.3 1.5H25V12.5H1.3ZM1.3 16.5H25V46H1.3ZM29.5 1.5H52.5V46H29.5Z" stroke="#5578d0" />
              <path d="M9 7.3H17M8.5 31.5H17.5M13 22V41M37.5 20.5H46M37.5 31H46" stroke="#1b259c" />
            </svg>
          </button>
        </div>
        <div className="flex items-start pl-[38px]">
          <input
            aria-label="支出名稱"
            placeholder="支出名稱"
            className="mt-[29px] h-[34px] w-[147px] border-b-3 border-[#1b259c] pl-[4px] text-[29px] leading-[30px] font-light placeholder:text-[#5071c8] placeholder:opacity-100"
          />
          <input
            aria-label="支出金額"
            placeholder="支出金額"
            className="mt-[29px] ml-[95px] h-[34px] w-[142px] border-b-3 border-[#1b259c] pl-[4px] text-[29px] leading-[30px] font-light placeholder:text-[#5071c8] placeholder:opacity-100"
          />
          <Diamond label="支出" className="mt-[7px] ml-[26px] size-[68px] text-[24px] leading-none font-light text-[#1b259c]">
            支出
          </Diamond>
        </div>
      </div>
    </section>
  );
}

/* ---------- flow board ---------- */

function FlowArrows() {
  return (
    <svg className="pointer-events-none absolute inset-0 size-full" aria-hidden="true" fill="#dd4b7c">
      <path d="M1963 1048L1970 1060.500L1767 1180L1806 1249L1625.500 1251L1718 1087.500L1731.500 1091L1725.500 1112L1760 1168Z" />
      <path d="M2179.500 1053.500H2195L2187.500 1624L2260 1627.500L2186.500 1747L2185.500 1774.500L2177 1760L2171 1769L2094 1621L2110.500 1614.500L2115 1621.500L2173.500 1624Z" />
      <path d="M2645 905L3282 1155.500L3342.500 1060L3357 1056.500L3371 1112L3430.500 1226L3241.500 1218.500L3273.500 1167.500L2639 919Z" />
    </svg>
  );
}

export default function App() {
  return (
    <main className="relative min-h-screen w-full bg-white font-['Open_Sans','Noto_Sans_CJK_TC',sans-serif]">
      <div className="absolute top-[12px] left-[1641px]"><SideMenu /></div>
      <div className="absolute top-[12px] left-[1949px]"><DiaryScreen /></div>
      <div className="absolute top-[1391px] left-[48px]"><GoogleCard /></div>
      <div className="absolute top-[1145px] left-[471px]"><VoiceScreen /></div>
      <div className="absolute top-[1145px] left-[1087px]"><CalculatorScreen /></div>
      <div className="absolute top-[2181px] left-[1206px]"><DescribeDialog /></div>
      <div className="absolute top-[1810px] left-[1831px]"><CategoryScreen /></div>
      <div className="absolute top-[2345px] left-[2382px]"><AccountList /></div>
      <div className="absolute top-[1571px] left-[3071px]"><MealList /></div>
      <div className="absolute top-[2120px] left-[3129px]"><SmallCalculator /></div>
      <div className="absolute top-[1217px] left-[3476px]"><ChatScreen /></div>
      <FlowArrows />
    </main>
  );
}
